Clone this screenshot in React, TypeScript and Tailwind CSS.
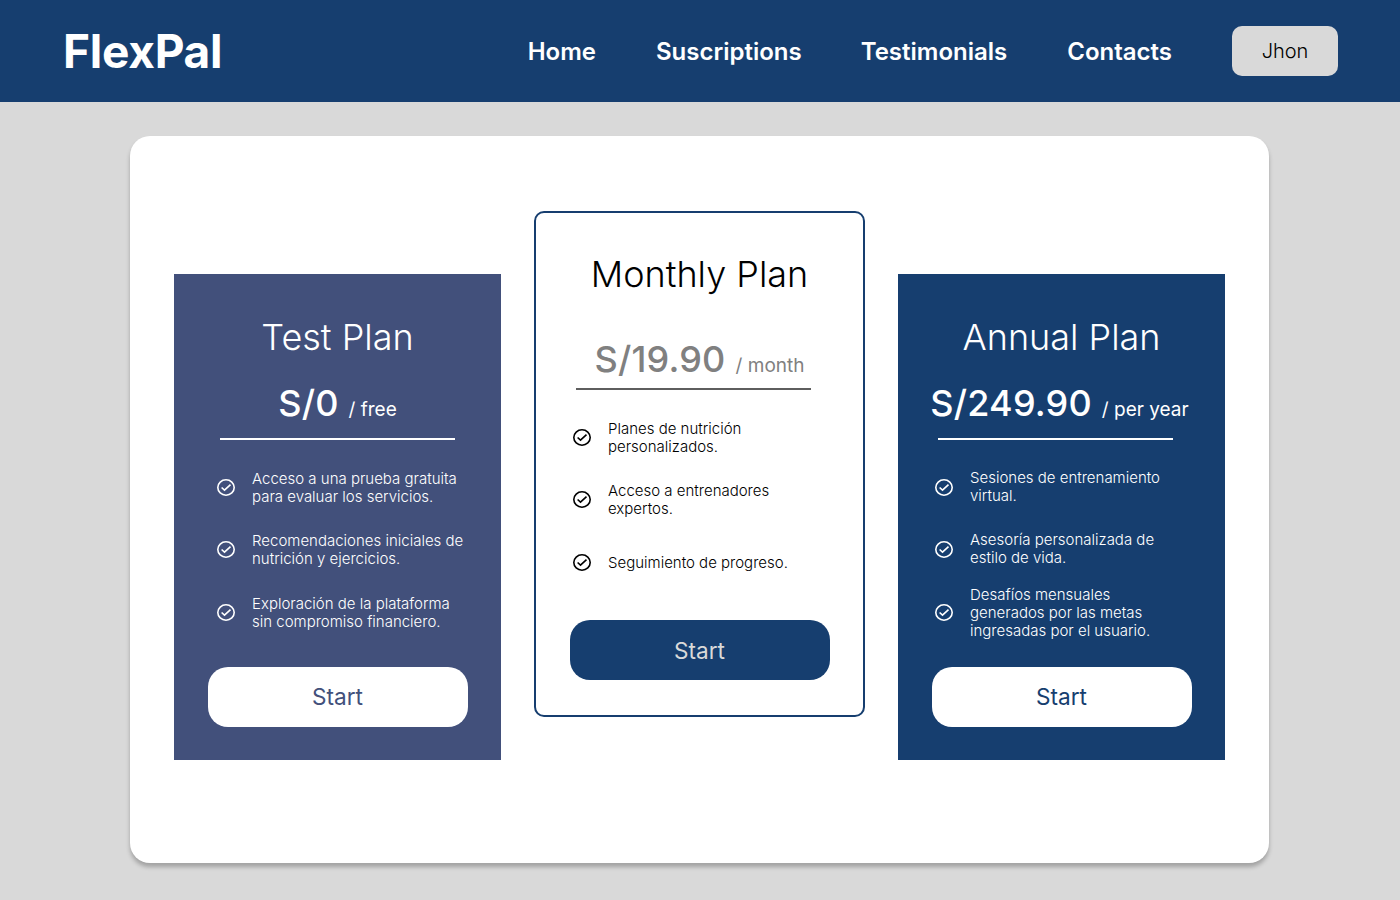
import { ReactNode } from "react";

function CheckIcon() {
  return (
    <svg className="size-6 shrink-0" viewBox="0 0 24 24" fill="none" stroke="currentColor" strokeWidth="1.6">
      <ellipse cx="12" cy="11.5" rx="8.2" ry="7.7" />
      <path d="M7.6 11.5L10.5 14.1L16.5 8.6" />
    </svg>
  );
}

function Feature({ lines, className = "" }: { lines: string[]; className?: string }) {
  return (
    <li className="flex h-[54px] items-center gap-[14px]">
      <CheckIcon />
      <span className={`text-[15px] leading-[18px] font-light whitespace-nowrap ${className}`}>
        {lines.map((line) => (
          <span key={line} className="block">{line}</span>
        ))}
      </span>
    </li>
  );
}

function FeatureList({ children, className }: { children: ReactNode; className: string }) {
  return (
    <ul className={`mt-[21px] grid h-[179px] grid-rows-[62px_63px_54px] ${className}`}>{children}</ul>
  );
}

function Price({ amount, period, className }: { amount: string; period: string; className: string }) {
  return (
    <p className={`flex h-[46px] items-baseline justify-center whitespace-nowrap ${className}`}>
      <span className="text-[36px] leading-[46px] font-medium tracking-[0.005em]">{amount}</span>
      <span className="ml-[10px] text-[19px]">{period}</span>
    </p>
  );
}

function Title({ children }: { children: ReactNode }) {
  return <h2 className="text-center text-[36px] leading-[46px] font-light">{children}</h2>;
}

export default function App() {
  return (
    <div className="flex h-[900px] w-[1400px] flex-col overflow-hidden bg-[#d9d9d9] font-['Inter',sans-serif]">
      <header className="flex h-[102px] shrink-0 items-center justify-between bg-[#163e6f] pr-[62px] pl-[63px] text-white">
        <h1 className="pb-px text-[46px] leading-[58px] font-bold tracking-[-0.25px]">FlexPal</h1>
        <nav className="flex items-center text-[24px] font-semibold">
          <a className="mr-[60px] pt-[2px]">Home</a>
          <a className="mr-[59px] pt-[2px]">Suscriptions</a>
          <a className="mr-[60px] pt-[2px]">Testimonials</a>
          <a className="mr-[60px] pt-[2px]">Contacts</a>
          <button className="h-[50px] w-[106px] rounded-[10px] bg-[#d9d9d9] text-[20px] font-light text-black">Jhon</button>
        </nav>
      </header>
      <main className="mt-[34px] ml-[130px] flex h-[727px] w-[1139px] items-start rounded-[20px] bg-white pl-[44px] shadow-[0_4px_4px_rgba(0,0,0,0.25)]">
        <section className="mt-[138px] h-[486px] w-[327px] bg-[#42507b] pt-[40px] text-white">
          <Title>Test Plan</Title>
          <Price amount="S/0" period="/ free" className="mt-[20px]" />
          <div className="mt-[12px] ml-[46px] h-[2px] w-[235px] bg-white" />
          <FeatureList className="ml-[40px]">
            <Feature lines={["Acceso a una prueba gratuita", "para evaluar los servicios."]} />
            <Feature lines={["Recomendaciones iniciales de", "nutrición y ejercicios."]} />
            <Feature lines={["Exploración de la plataforma", "sin compromiso financiero."]} />
          </FeatureList>
          <button className="mt-[27px] ml-[34px] block h-[60px] w-[260px] rounded-[20px] bg-white pr-px text-[22.6px] text-[#42507b]">Start</button>
        </section>
        <section className="mt-[75px] ml-[33px] h-[506px] w-[331px] rounded-[10px] border-2 border-[#163e6f] bg-white pt-[38px] text-black">
          <Title>Monthly Plan</Title>
          <Price amount="S/19.90" period="/ month" className="mt-[39px] text-[#808080]" />
          <div className="mt-[6px] ml-[40px] h-[2px] w-[235px] bg-[#5e5e5e]" />
          <FeatureList className="ml-[34px]">
            <Feature lines={["Planes de nutrición", "personalizados."]} />
            <Feature lines={["Acceso a entrenadores", "expertos."]} />
            <Feature lines={["Seguimiento de progreso."]} />
          </FeatureList>
          <button className="mt-[30px] ml-[34px] block h-[60px] w-[260px] rounded-[20px] bg-[#163e6f] pt-px pr-px text-[22.6px] text-[#d9d9d9]">Start</button>
        </section>
        <section className="mt-[138px] ml-[33px] h-[486px] w-[327px] bg-[#163e6f] pt-[40px] text-white">
          <Title>Annual Plan</Title>
          <Price amount="S/249.90" period="/ per year" className="mt-[20px] -ml-[4px]" />
          <div className="mt-[12px] ml-[40px] h-[2px] w-[235px] bg-white" />
          <FeatureList className="ml-[34px]">
            <Feature lines={["Sesiones de entrenamiento", "virtual."]} className="mb-[2px]" />
            <Feature lines={["Asesoría personalizada de", "estilo de vida."]} className="mb-[2px]" />
            <Feature lines={["Desafíos mensuales", "generados por las metas", "ingresadas por el usuario."]} />
          </FeatureList>
          <button className="mt-[27px] ml-[34px] block h-[60px] w-[260px] rounded-[20px] bg-white pr-px text-[22.6px] text-[#163e6f]">Start</button>
        </section>
      </main>
    </div>
  );
}
